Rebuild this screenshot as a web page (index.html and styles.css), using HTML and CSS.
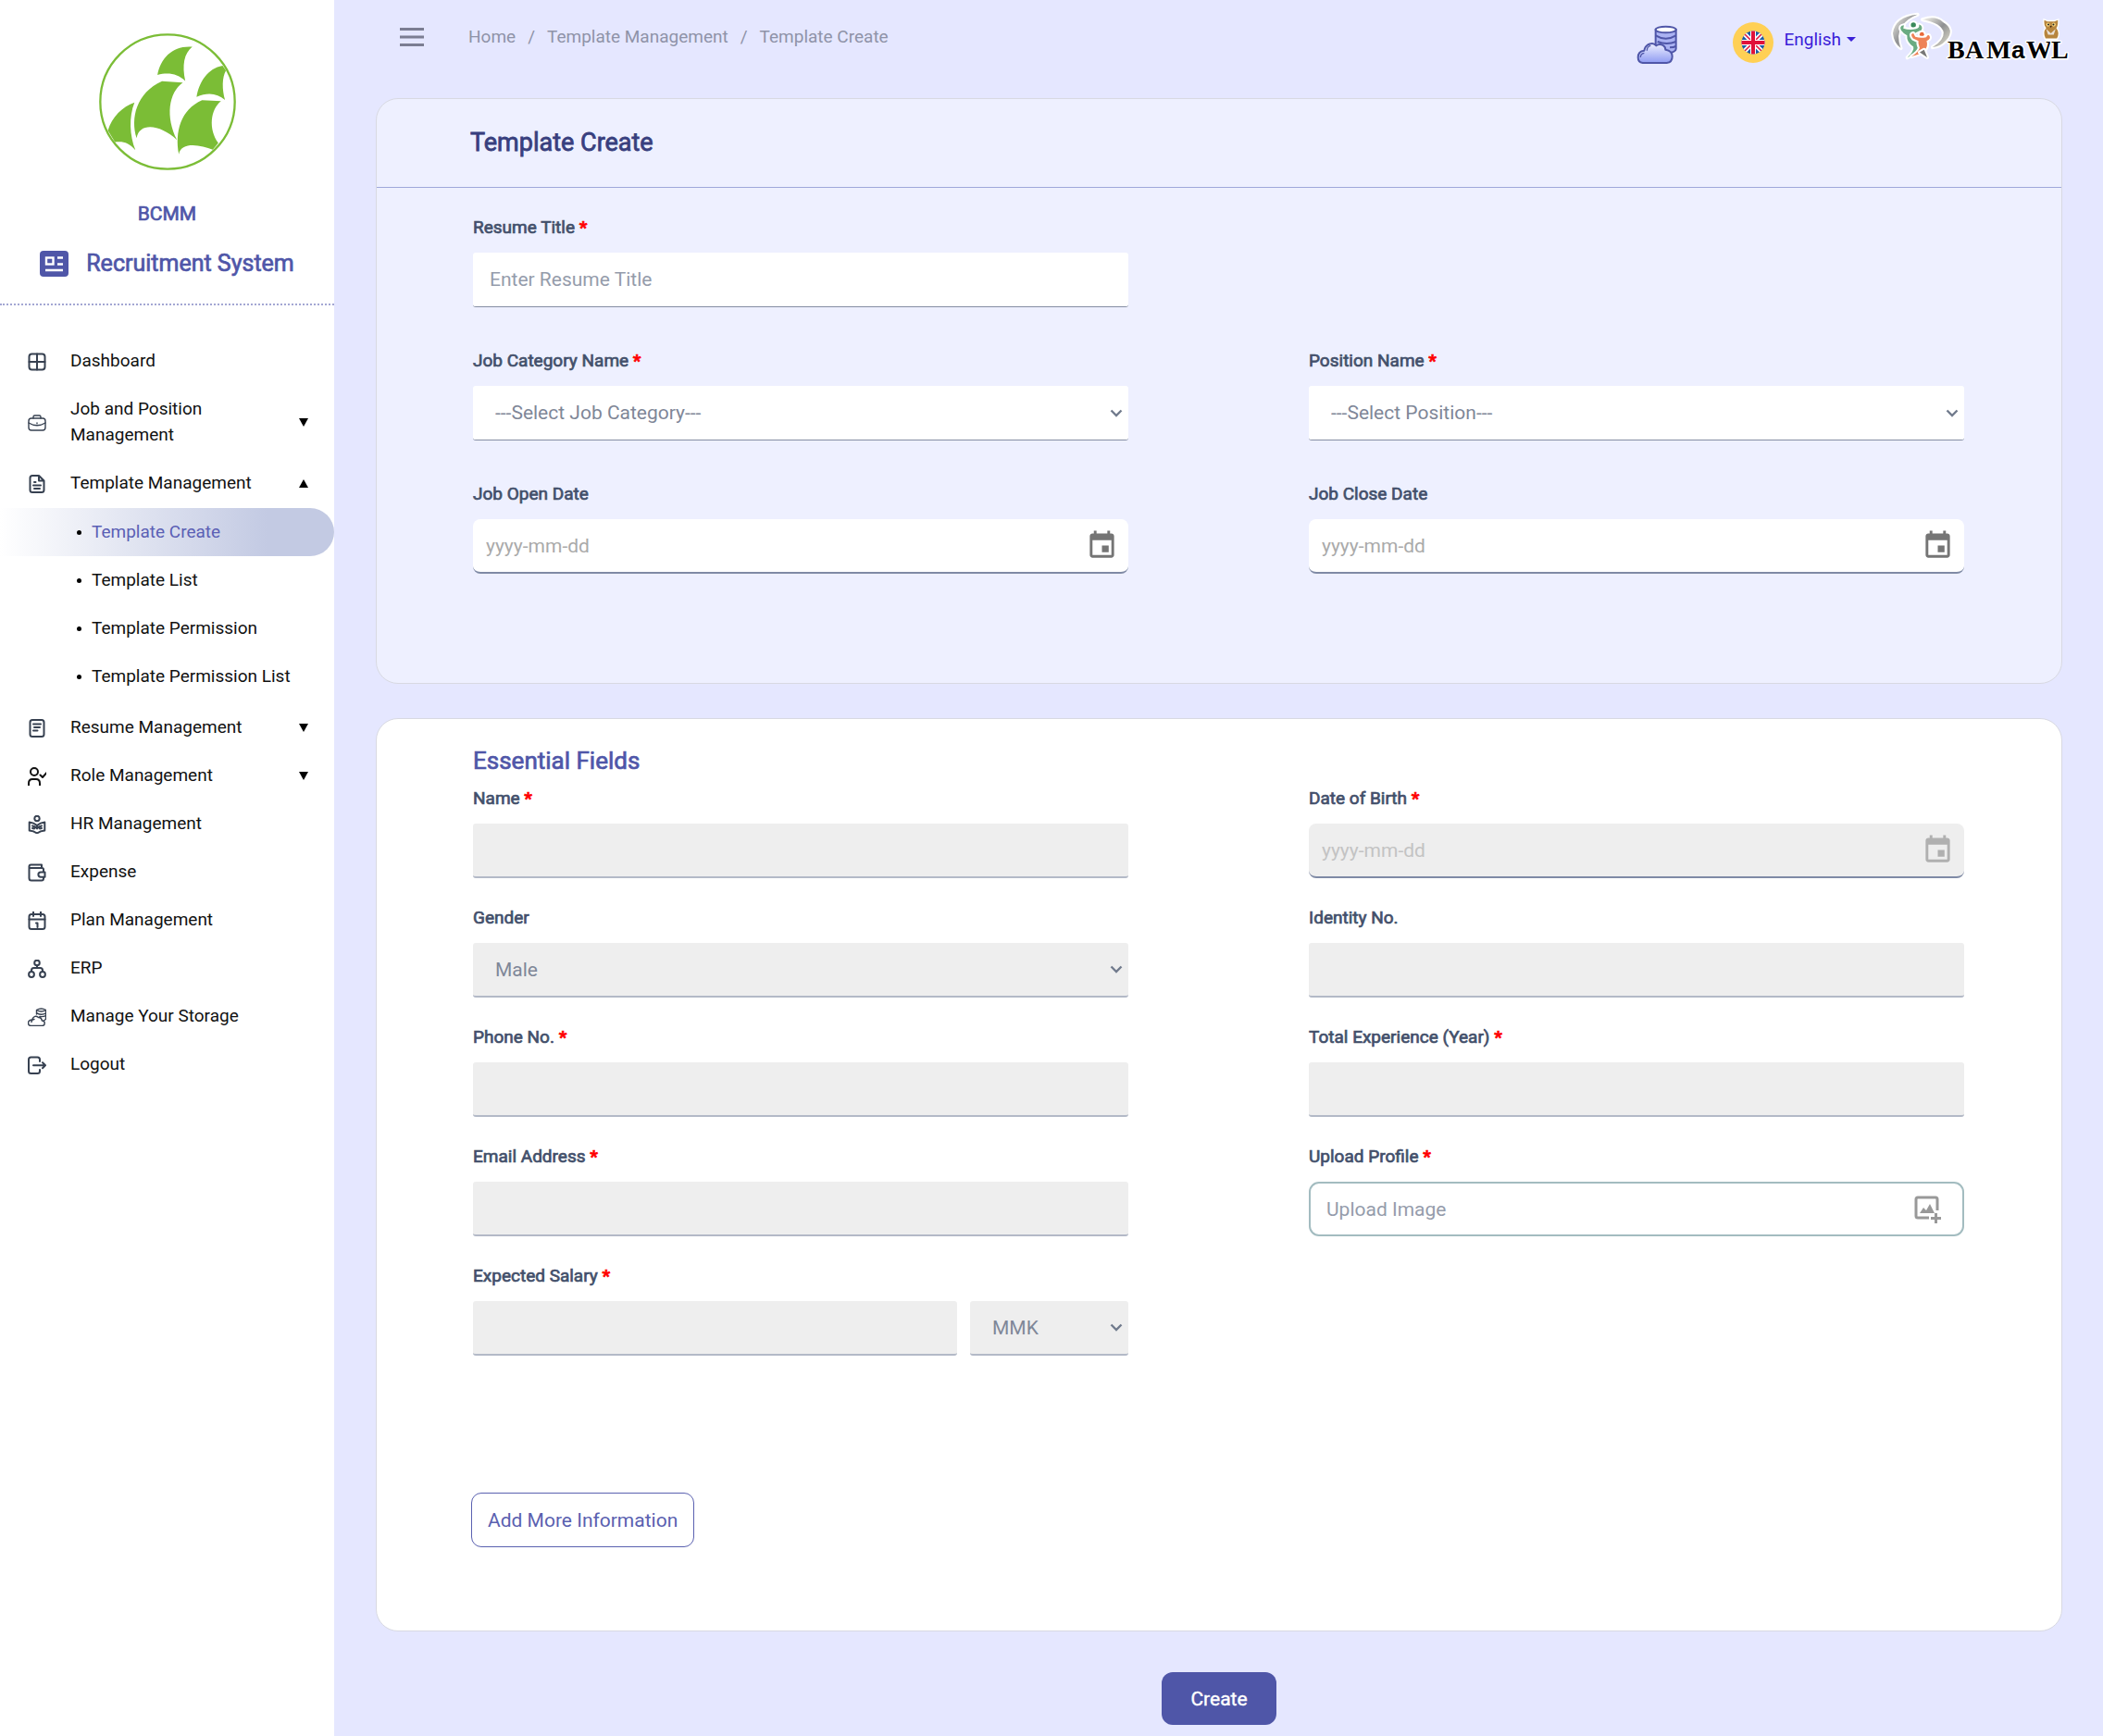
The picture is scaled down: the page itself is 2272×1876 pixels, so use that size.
FILE: index.html
```html
<!DOCTYPE html>
<html lang="en">
<head>
    <meta charset="UTF-8">
    <meta name="viewport" content="width=device-width, initial-scale=1.0">
    <title>Template Create</title>
    <link rel="stylesheet" href="styles.css">
</head>
<body>
    <aside class="sidebar">
        <div class="brand">
            <svg class="brand-logo" viewBox="318 106 448 448" aria-hidden="true">
                <circle cx="542" cy="330" r="220" fill="#fff" stroke="#7bbd36" stroke-width="7"/>
                <g fill="#7bbd36">
                    <path d="M623 150C596 172 589 210 600 262C575 238 545 233 509 242C520 185 560 145 623 150Z"/>
                    <path d="M733 228C720 250 720 290 730 324C705 303 675 298 637 314C645 265 675 220 722 212Z"/>
                    <path d="M524 263L592 267C545 300 535 380 573 455C520 405 450 395 441 449C420 385 440 300 524 263Z"/>
                    <path d="M655 325L717 328C682 355 675 420 708 465L690 487C650 470 585 460 579 502C565 430 585 355 655 325Z"/>
                    <path d="M434 332C415 380 418 440 437 488C415 463 395 458 370 462L347 424C360 380 395 345 434 332Z"/>
                </g>
            </svg>
            <p class="company">BCMM</p>
            <h1 class="system">
                <svg class="system-icon" viewBox="0 0 31 28" aria-hidden="true">
                    <rect width="31" height="28" rx="4" fill="#4f56a8"/>
                    <g fill="none" stroke="#fff" stroke-width="2.4">
                        <rect x="7" y="7.500" width="7.500" height="7"/>
                        <path d="M19 7.500h6M19 14.500h6M6 21h19"/>
                    </g>
                </svg>
                Recruitment System
            </h1>
        </div>

        <nav class="menu">
            <a class="menu-link" href="#">
                <svg class="menu-icon" viewBox="0 0 20 20"><rect x="1.500" y="1.500" width="17" height="17" rx="3"/><path d="M10 1.500v17M1.500 10h17"/></svg>
                <span>Dashboard</span>
            </a>
            <a class="menu-link" href="#">
                <svg class="menu-icon thin" viewBox="0 0 20 20"><rect x="1" y="5" width="18" height="13" rx="3"/><path d="M6 5V3.500Q6 2 7.500 2h5Q14 2 14 3.500V5M1 10q9 5.500 18 0M10 10v.8"/></svg>
                <span>Job and Position Management</span>
                <svg class="arrow" viewBox="0 0 10 9"><path d="M0 0h10L5 9z"/></svg>
            </a>
            <a class="menu-link" href="#">
                <svg class="menu-icon" viewBox="0 0 20 20"><path d="M12 1H5Q2.500 1 2.500 3.500v13Q2.500 19 5 19h10q2.500 0 2.500-2.500V6.500zM12 1v5.500h5.500M6 11.500h8M7 15h6M7 8h1.500"/></svg>
                <span>Template Management</span>
                <svg class="arrow" viewBox="0 0 10 9"><path d="M0 9h10L5 0z"/></svg>
            </a>
            <ul class="submenu">
                <li class="active"><a href="#">Template Create</a></li>
                <li><a href="#">Template List</a></li>
                <li><a href="#">Template Permission</a></li>
                <li><a href="#">Template Permission List</a></li>
            </ul>
            <a class="menu-link" href="#">
                <svg class="menu-icon" viewBox="0 0 20 20"><rect x="2.500" y="1" width="15" height="18" rx="2.500"/><path d="M6 5.500h8M7 9h6M6 12.500h4.500"/></svg>
                <span>Resume Management</span>
                <svg class="arrow" viewBox="0 0 10 9"><path d="M0 0h10L5 9z"/></svg>
            </a>
            <a class="menu-link" href="#">
                <svg class="menu-icon dark" viewBox="0 0 20 20"><circle cx="7" cy="5" r="4"/><path d="M1 19.500v-2Q1 13 5 13h4q4 0 4 4.500v2M13.500 8.500l2.500 2.500 4.500-5"/></svg>
                <span>Role Management</span>
                <svg class="arrow" viewBox="0 0 10 9"><path d="M0 0h10L5 9z"/></svg>
            </a>
            <a class="menu-link" href="#">
                <svg class="menu-icon" viewBox="0 0 20 20"><circle cx="10" cy="3.500" r="2.700"/><path d="M10 11Q6.500 8 1.700 7.500v9Q6.500 17 10 19.500q3.500-2.500 8.300-3v-9Q13.500 8 10 11zM10 11v3M5 11.500q3 .5 5 3 2-2.500 5-3M5 14l2 .5M15 14l-2 .5"/></svg>
                <span>HR Management</span>
            </a>
            <a class="menu-link" href="#">
                <svg class="menu-icon" viewBox="0 0 20 20"><path d="M17 9V6.500Q17 5 15.500 5H1.500V3.500Q1.500 1.500 3.500 1.500H15V5M1.500 4v12q0 2.500 2.500 2.500h11q2 0 2-2V15M18.500 9.500H14a2.600 2.600 0 000 5.200h4.500z"/></svg>
                <span>Expense</span>
            </a>
            <a class="menu-link" href="#">
                <svg class="menu-icon" viewBox="0 0 20 20"><rect x="1.500" y="3" width="17" height="16" rx="2.500"/><path d="M1.500 8.500h17M6 0v5M14 0v5M9 12.500h1.500V17"/></svg>
                <span>Plan Management</span>
            </a>
            <a class="menu-link" href="#">
                <svg class="menu-icon" viewBox="0 0 20 20"><circle cx="10" cy="3.500" r="2.800"/><circle cx="4" cy="16" r="2.900"/><circle cx="16" cy="16" r="2.900"/><path d="M10 6.300V9M4 13v-1.500Q4 9 6.500 9h7Q16 9 16 11.500V13"/></svg>
                <span>ERP</span>
            </a>
            <a class="menu-link" href="#">
                <svg class="menu-icon thin" viewBox="0 0 20 20"><path d="M9.500 7V2.500q5-3 10 0v10L17 14M9.500 2.500q5 3 10 0M10 6q5 2.500 9.500 0M13 9.500q4 .5 6.500-1M3.500 19.500h12a2.700 2.700 0 000-5.500q-1-4-4-3.500-4-3.500-7 2.500-4 .5-4 3.500 0 3 3 3zM4 15.500q0-3 3-3"/></svg>
                <span>Manage Your Storage</span>
            </a>
            <a class="menu-link" href="#">
                <svg class="menu-icon" viewBox="0 0 20 20"><path d="M13 6V4q0-2.500-2.500-2.500h-7Q1 1.500 1 4v12.500Q1 19 3.500 19h7q2.500 0 2.500-2.500V15M6 10.300h13M16 7.300l3 3-3 3"/></svg>
                <span>Logout</span>
            </a>
        </nav>
    </aside>

    <main class="content">
        <header class="topbar">
            <button class="toggle" type="button" aria-label="Toggle menu">
                <svg viewBox="0 0 26 20"><path d="M0 1.500h26M0 10h26M0 18.500h26" stroke="#7b7d92" stroke-width="3"/></svg>
            </button>
            <nav class="breadcrumb">
                <a href="#">Home</a>
                <span>/</span>
                <a href="#">Template Management</a>
                <span>/</span>
                <a href="#">Template Create</a>
            </nav>

            <a class="storage" href="#" aria-label="Storage">
                <svg viewBox="82 78 132 129">
                    <defs>
                        <linearGradient id="cloud" x1="0" y1="0" x2="0" y2="1">
                            <stop offset="0" stop-color="#eef0ff"/>
                            <stop offset="1" stop-color="#8f9bf2"/>
                        </linearGradient>
                    </defs>
                    <g stroke="#4f56a8" stroke-width="6" stroke-linejoin="round">
                        <path d="M144 92v58l40 20q26-5 26-15V92z" fill="#aab2f2"/>
                        <ellipse cx="177" cy="93" rx="33" ry="10" fill="#fff"/>
                        <path d="M144 112q33 20 66 0M150 132q30 12 60 0M190 151q14 0 20-5" fill="none"/>
                        <path d="M102 201q-15-2-15-18 0-20 20-22 3-18 20-22 10-4 19 6 10-8 22-1 8 5 8 14 22 3 22 22 0 19-18 21z" fill="url(#cloud)"/>
                        <path d="M95 183q0-12 12-14M116 161q0-14 12-16" fill="none" stroke-width="4"/>
                    </g>
                </svg>
            </a>
            <svg class="flag" viewBox="0 0 44 44" aria-hidden="true">
                <defs><clipPath id="round"><circle cx="22" cy="22" r="12.500"/></clipPath></defs>
                <circle cx="22" cy="22" r="22" fill="#ffd055"/>
                <g clip-path="url(#round)">
                    <rect x="9" y="9" width="26" height="26" fill="#1b5aa8"/>
                    <path d="M9 9l26 26M35 9L9 35" stroke="#fff" stroke-width="5"/>
                    <path d="M9 9l26 26M35 9L9 35" stroke="#e0103a" stroke-width="1.500"/>
                    <path d="M22 9v26M9 22h26" stroke="#fff" stroke-width="6"/>
                    <path d="M22 9v26M9 22h26" stroke="#e0103a" stroke-width="4"/>
                </g>
            </svg>
            <button class="language" type="button">English</button>

            <svg class="partner" viewBox="0 -4 194 62" role="img" aria-label="BAMaWL">
                <defs>
                    <linearGradient id="silver" x1="0" y1="0" x2="1" y2="1">
                        <stop offset="0" stop-color="#f7f6ee"/>
                        <stop offset=".5" stop-color="#8f9092"/>
                        <stop offset="1" stop-color="#e9e6d2"/>
                    </linearGradient>
                </defs>
                <g transform="scale(.34) translate(-893 -40)">
                    <g fill="url(#silver)" stroke="#fff" stroke-width="12" stroke-linejoin="round" paint-order="stroke">
                        <path d="M977 48Q905 55 899 108Q902 140 924 155Q908 112 928 84Q945 60 977 48Z"/>
                        <path d="M993 64Q1035 50 1058 72Q1098 95 1068 130Q1050 150 1025 152Q1062 130 1060 105Q1055 75 993 64Z"/>
                    </g>
                    <g stroke="#fff" stroke-width="12" stroke-linejoin="round" paint-order="stroke">
                        <circle cx="964" cy="81" r="8" fill="#39895a"/>
                        <path d="M925 98Q918 84 934 82L932 92Q950 98 972 94Q985 90 982 80Q995 84 990 97Q970 104 963 112Q968 130 984 143Q984 165 945 185Q968 162 964 150Q942 135 944 114Q932 108 925 98Z" fill="#6bab82"/>
                        <circle cx="991" cy="111" r="7" fill="#e9683a"/>
                        <path d="M963 124Q952 110 964 108L970 119Q988 124 1005 120Q1008 112 1014 114Q1022 124 1006 132Q1012 150 998 163Q985 176 958 181Q980 168 984 154Q978 140 980 132Z" fill="#ee8258"/>
                        <path d="M998 160L1008 184 984 168Z" fill="#777"/>
                    </g>
                    <g stroke="#fff" stroke-width="8" paint-order="stroke">
                        <path d="M1380 66L1390 70H1412L1423 66Q1424 85 1418 91Q1430 107 1420 124H1384Q1374 105 1386 91Q1378 82 1380 66Z" fill="#b7853d"/>
                    </g>
                    <circle cx="1392" cy="80" r="6" fill="#f8d982"/>
                    <circle cx="1410" cy="80" r="6" fill="#f8d982"/>
                    <circle cx="1393" cy="80" r="3" fill="#222"/>
                    <circle cx="1409" cy="80" r="3" fill="#222"/>
                    <path d="M1386 94L1401 108 1416 94 1410 112H1392Z" fill="#e9e1d6"/>
                    <path d="M1398 84h6l-3 7z" fill="#34210f"/>
                </g>
                <text class="partner-name" x="61 80 103" y="50">BAM</text>
                <text class="partner-small" x="130" y="50">a</text>
                <text class="partner-name" x="146 173" y="50">WL</text>
            </svg>
        </header>

        <form class="template-form">
            <section class="card card-top">
                <h2 class="card-title">Template Create</h2>
                <div class="fields fields-wide">
                    <div class="field full">
                        <label for="resumeTitle">Resume Title <b>*</b></label>
                        <input class="control" id="resumeTitle" type="text" placeholder="Enter Resume Title">
                    </div>
                    <div class="field">
                        <label for="jobCategory">Job Category Name <b>*</b></label>
                        <select class="control" id="jobCategory"><option>---Select Job Category---</option></select>
                    </div>
                    <div class="field">
                        <label for="position">Position Name <b>*</b></label>
                        <select class="control" id="position"><option>---Select Position---</option></select>
                    </div>
                    <div class="field">
                        <label for="openDate">Job Open Date</label>
                        <div class="date-box">
                            <input id="openDate" type="text" placeholder="yyyy-mm-dd">
                            <button type="button" aria-label="Choose open date">
                                <svg viewBox="0 0 24 24"><path d="M17 12h-5v5h5v-5zM16 1v2H8V1H6v2H5c-1.110 0-2 .9-2 2v14c0 1.100.89 2 2 2h14c1.100 0 2-.9 2-2V5c0-1.100-.9-2-2-2h-1V1h-2zm3 18H5V8h14v11z"/></svg>
                            </button>
                        </div>
                    </div>
                    <div class="field">
                        <label for="closeDate">Job Close Date</label>
                        <div class="date-box">
                            <input id="closeDate" type="text" placeholder="yyyy-mm-dd">
                            <button type="button" aria-label="Choose close date">
                                <svg viewBox="0 0 24 24"><path d="M17 12h-5v5h5v-5zM16 1v2H8V1H6v2H5c-1.110 0-2 .9-2 2v14c0 1.100.89 2 2 2h14c1.100 0 2-.9 2-2V5c0-1.100-.9-2-2-2h-1V1h-2zm3 18H5V8h14v11z"/></svg>
                            </button>
                        </div>
                    </div>
                </div>
            </section>

            <section class="card card-essential">
                <h2 class="section-title">Essential Fields</h2>
                <div class="fields">
                    <div class="field">
                        <label for="name">Name <b>*</b></label>
                        <input class="control" id="name" type="text" disabled>
                    </div>
                    <div class="field">
                        <label for="birth">Date of Birth <b>*</b></label>
                        <div class="date-box off">
                            <input id="birth" type="text" placeholder="yyyy-mm-dd" disabled>
                            <button type="button" aria-label="Choose date of birth" disabled>
                                <svg viewBox="0 0 24 24"><path d="M17 12h-5v5h5v-5zM16 1v2H8V1H6v2H5c-1.110 0-2 .9-2 2v14c0 1.100.89 2 2 2h14c1.100 0 2-.9 2-2V5c0-1.100-.9-2-2-2h-1V1h-2zm3 18H5V8h14v11z"/></svg>
                            </button>
                        </div>
                    </div>
                    <div class="field">
                        <label for="gender">Gender</label>
                        <select class="control" id="gender" disabled><option>Male</option></select>
                    </div>
                    <div class="field">
                        <label for="identity">Identity No.</label>
                        <input class="control" id="identity" type="text" disabled>
                    </div>
                    <div class="field">
                        <label for="phone">Phone No. <b>*</b></label>
                        <input class="control" id="phone" type="text" disabled>
                    </div>
                    <div class="field">
                        <label for="experience">Total Experience (Year) <b>*</b></label>
                        <input class="control" id="experience" type="text" disabled>
                    </div>
                    <div class="field">
                        <label for="email">Email Address <b>*</b></label>
                        <input class="control" id="email" type="email" disabled>
                    </div>
                    <div class="field">
                        <label for="profile">Upload Profile <b>*</b></label>
                        <div class="upload-box">
                            <input id="profile" type="text" placeholder="Upload Image" readonly>
                            <button type="button" aria-label="Choose image">
                                <svg viewBox="0 0 30 30"><path d="M25 16V4q0-2-2-2H4Q2 2 2 4v18q0 2 2 2h12" fill="none" stroke="#999" stroke-width="3"/><path d="M6 19l4-6 3 3 4-7 5 10zM22 19h3v4h4v3h-4v4h-3v-4h-4v-3h4z"/></svg>
                            </button>
                        </div>
                    </div>
                    <div class="field">
                        <label for="salary">Expected Salary <b>*</b></label>
                        <div class="salary">
                            <input class="control" id="salary" type="text" disabled>
                            <select class="control" aria-label="Currency" disabled><option>MMK</option></select>
                        </div>
                    </div>
                </div>
                <button class="add-btn" type="button">Add More Information</button>
            </section>

            <button class="create-btn" type="submit">Create</button>
        </form>
    </main>
</body>
</html>
```
FILE: styles.css
```css
* {
    box-sizing: border-box;
}

body {
    margin: 0;
    display: flex;
    min-height: 100vh;
    background-color: #e5e7ff;
    font-family: Roboto, "Liberation Sans", sans-serif;
    font-size: 19px;
    line-height: 28px;
    color: #111;
}

a {
    color: inherit;
    text-decoration: none;
}

h1, h2, p, ul {
    margin: 0;
    padding: 0;
    font-weight: 400;
}

button, input, select {
    font-family: inherit;
    font-size: 21px;
}

button {
    padding: 0;
    border: 0;
    background: none;
    cursor: pointer;
}

svg {
    display: block;
    flex-shrink: 0;
}

/* Sidebar */
.sidebar {
    flex: 0 0 361px;
    background-color: #fff;
}

.brand {
    display: flex;
    flex-direction: column;
    align-items: center;
    padding: 36px 0 29px;
    border-bottom: 2px dotted #a3a7d3;
    color: #4f56a8;
    -webkit-text-stroke: 0.7px #4f56a8;
}

.brand-logo {
    width: 148px;
    height: 148px;
}

.company {
    margin-top: 33px;
    font-size: 21px;
}

.system {
    display: flex;
    align-items: center;
    gap: 19px;
    margin-top: 26px;
    font-size: 25px;
}

.system-icon {
    width: 31px;
    height: 28px;
}

.menu {
    padding-top: 34px;
}

.menu-link {
    display: flex;
    align-items: center;
    padding: 12px 28px 12px 30px;
}

.menu-link span {
    flex: 1;
    margin: 0 50px 0 26px;
}

.menu-link .arrow {
    margin-left: -50px;
}

.menu-icon {
    width: 20px;
    height: 20px;
    margin-top: 2px;
    fill: none;
    stroke: #374151;
    stroke-width: 2;
    stroke-linecap: round;
    stroke-linejoin: round;
}

.menu-icon.thin {
    stroke-width: 1.4;
}

.menu-icon.dark {
    stroke: #111;
}

.arrow {
    width: 10px;
    height: 9px;
    fill: #000;
}

.submenu {
    margin: 1px 0 3px;
    list-style: none;
}

.submenu a {
    display: flex;
    align-items: center;
    height: 52px;
    padding-left: 83px;
}

.submenu a::before {
    content: "";
    width: 5px;
    height: 5px;
    margin-right: 11px;
    border-radius: 50%;
    background-color: #000;
}

.submenu .active a {
    color: #5b5fb5;
    border-radius: 0 26px 26px 0;
    background: linear-gradient(to right, #fff, #c3cae3 80%);
}

/* Top bar */
.content {
    flex: 1;
    min-width: 0;
    padding: 0 44px 12px 45px;
}

.topbar {
    display: flex;
    align-items: center;
    height: 80px;
    padding-left: 26px;
    margin: 0 -9px 26px 0;
}

.toggle svg {
    width: 26px;
    height: 20px;
}

.breadcrumb {
    display: flex;
    gap: 13px;
    margin-left: 48px;
    color: #8f93a8;
}

.storage {
    margin: 16px 0 0 auto;
}

.storage svg {
    width: 44px;
    height: 43px;
}

.flag {
    width: 44px;
    height: 44px;
    margin: 12px 12px 0 60px;
}

.language {
    display: flex;
    align-items: center;
    margin: 5px 38px 0 0;
    font-size: 19px;
    line-height: 28px;
    color: #3b20d8;
}

.language::after {
    content: "";
    margin-left: 6px;
    border: 5px solid transparent;
    border-top-color: #3b20d8;
    border-bottom: 0;
}

.partner {
    width: 194px;
    height: 62px;
}

.partner-name, .partner-small {
    font-family: "Liberation Serif", serif;
    font-size: 28px;
    font-weight: 700;
    stroke: #fff;
    stroke-width: 3px;
    stroke-linejoin: round;
    paint-order: stroke;
}

.partner-small {
    font-family: "Liberation Sans", sans-serif;
    font-size: 26px;
}

/* Cards */
.template-form {
    display: flex;
    flex-direction: column;
}

.card {
    border: 1px solid #d8d9e2;
    border-radius: 24px;
}

.card-top {
    padding-bottom: 118px;
    background-color: #eef0ff;
}

.card-title {
    padding: 33px 101px 34px;
    border-bottom: 1px solid #9fa8da;
    font-size: 27px;
    color: #383f7e;
    -webkit-text-stroke: 0.8px #383f7e;
}

.card-essential {
    margin-top: 37px;
    padding: 31px 0 90px;
    background-color: #fff;
}

.section-title {
    padding: 0 104px;
    margin-bottom: 13px;
    font-size: 26px;
    color: #4f56a8;
    -webkit-text-stroke: 0.7px #4f56a8;
}

.fields {
    display: grid;
    grid-template-columns: 1fr 1fr;
    gap: 29px 195px;
    padding: 0 105px 0 104px;
}

.fields-wide {
    row-gap: 44px;
    padding-top: 29px;
}

.full {
    grid-column: 1 / -1;
    width: calc(50% - 98px);
}

.field label {
    display: block;
    margin-bottom: 13px;
    color: #43506b;
    -webkit-text-stroke: 0.7px #43506b;
}

.field b {
    font-weight: 700;
    color: #f00;
    -webkit-text-stroke: 0.7px #f00;
}

.control {
    display: block;
    width: 100%;
    height: 59px;
    padding: 0 18px;
    border: 0;
    border-bottom: 1px solid #858da3;
    border-radius: 3px;
    background-color: #fff;
    color: #7f8798;
    opacity: 1;
}

select.control {
    appearance: none;
    padding: 0 24px;
    padding-right: 28px;
    background-image: url("data:image/svg+xml,%3Csvg xmlns='http://www.w3.org/2000/svg' viewBox='0 0 14 9'%3E%3Cpath d='M1.500 1.500L7 7l5.500-5.500' fill='none' stroke='%23717b8d' stroke-width='2.400'/%3E%3C/svg%3E");
    background-repeat: no-repeat;
    background-position: right 6px center;
    background-size: 14px 9px;
}

.control:disabled {
    border-bottom: 2px solid #b3b9c7;
    background-color: #eee;
}

.control::placeholder, .upload-box input::placeholder {
    color: #959cab;
}

.date-box, .upload-box {
    display: flex;
    align-items: center;
    height: 59px;
    border-bottom: 2px solid #7f8aa5;
    border-radius: 8px;
    background-color: #fff;
}

.date-box input, .upload-box input {
    flex: 1;
    min-width: 0;
    padding: 0 14px;
    border: 0;
    background: none;
}

.date-box input::placeholder {
    color: #aaa;
}

.date-box svg {
    width: 35px;
    height: 35px;
    margin-right: 11px;
    fill: #757575;
}

.date-box.off {
    background-color: #eee;
}

.date-box.off input::placeholder {
    color: #c3c3c3;
}

.date-box.off svg {
    fill: #b0b0b0;
}

.upload-box {
    border: 2px solid #a3bcc0;
    border-radius: 11px;
}

.upload-box input {
    padding: 0 17px;
}

.upload-box svg {
    width: 30px;
    height: 30px;
    margin-right: 22px;
    fill: #999;
}

.salary {
    display: flex;
    gap: 14px;
}

.salary select.control {
    flex: 0 0 171px;
}

/* Buttons */
.add-btn {
    display: block;
    height: 59px;
    margin: 148px 0 0 102px;
    padding: 0 17px;
    border: 1px solid #5a61b0;
    border-radius: 11px;
    color: #5a61b0;
}

.create-btn {
    align-self: center;
    height: 57px;
    margin-top: 44px;
    padding: 0 31px;
    border-radius: 12px;
    background-color: #4f56a8;
    color: #fff;
    -webkit-text-stroke: 0.4px #fff;
}
```
